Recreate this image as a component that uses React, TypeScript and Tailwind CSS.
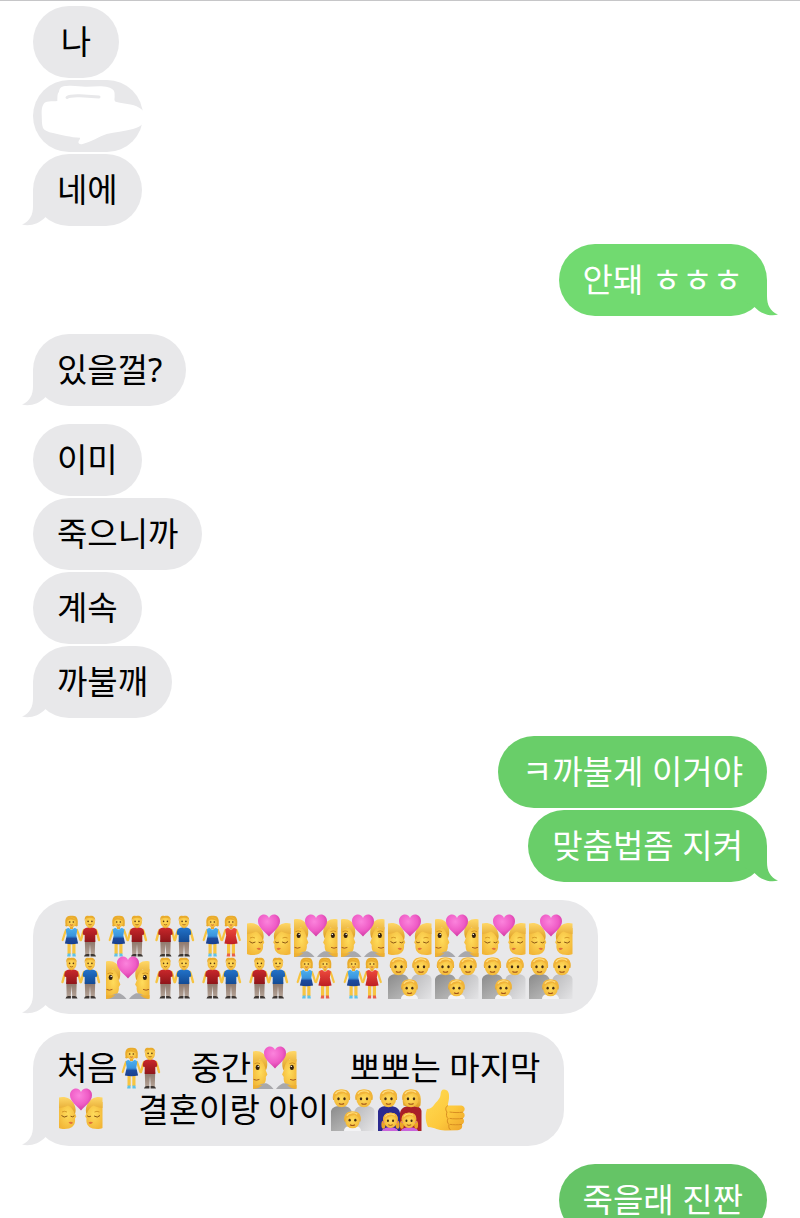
import { Fragment } from "react";
import clsx from "clsx";

type EmojiKind = "wm" | "mm" | "ww" | "kiss" | "couple" | "family" | "parents" | "thumb";

const SKIN = "#f7c440";
const HAIR = "#e9ab2c";

function Gradients() {
  return (
    <svg className="absolute size-0" aria-hidden="true">
      <defs>
        <radialGradient id="skin" cx="50%" cy="45%" r="60%">
          <stop offset="0" stopColor="#ffdc5c" />
          <stop offset="1" stopColor="#f2b637" />
        </radialGradient>
        <linearGradient id="hair" x1="0" y1="0" x2="0" y2="1">
          <stop offset="0" stopColor="#ffd868" />
          <stop offset="1" stopColor="#dd9c22" />
        </linearGradient>
        <radialGradient id="heart" cx="42%" cy="32%" r="70%">
          <stop offset="0" stopColor="#fb83dc" />
          <stop offset="0.6" stopColor="#ef5cc6" />
          <stop offset="1" stopColor="#cf37a0" />
        </radialGradient>
        <linearGradient id="red" x1="0" y1="0" x2="0" y2="1">
          <stop offset="0" stopColor="#c9272b" />
          <stop offset="1" stopColor="#8f1519" />
        </linearGradient>
        <linearGradient id="blue" x1="0" y1="0" x2="0" y2="1">
          <stop offset="0" stopColor="#2273c9" />
          <stop offset="1" stopColor="#134a94" />
        </linearGradient>
        <linearGradient id="blueDress" x1="0" y1="0" x2="0" y2="1">
          <stop offset="0" stopColor="#4db0ee" />
          <stop offset="0.5" stopColor="#3a94dd" />
          <stop offset="0.65" stopColor="#1d4a9e" />
          <stop offset="1" stopColor="#1b3f8c" />
        </linearGradient>
        <linearGradient id="redDress" x1="0" y1="0" x2="0" y2="1">
          <stop offset="0" stopColor="#ee4a3c" />
          <stop offset="1" stopColor="#bd1f24" />
        </linearGradient>
        <linearGradient id="trousers" x1="0" y1="0" x2="0" y2="1">
          <stop offset="0" stopColor="#8b7468" />
          <stop offset="1" stopColor="#b3a296" />
        </linearGradient>
        <linearGradient id="darkGray" x1="0" y1="0" x2="0.6" y2="1">
          <stop offset="0" stopColor="#8a8a8a" />
          <stop offset="1" stopColor="#b5b5b5" />
        </linearGradient>
        <linearGradient id="lightGray" x1="0" y1="0" x2="1" y2="1">
          <stop offset="0" stopColor="#b8b8ba" />
          <stop offset="1" stopColor="#e4e4e6" />
        </linearGradient>
        <linearGradient id="thumb" x1="0" y1="0" x2="1" y2="1">
          <stop offset="0" stopColor="#ffdc55" />
          <stop offset="0.6" stopColor="#fdc83c" />
          <stop offset="1" stopColor="#eda32a" />
        </linearGradient>
      </defs>
    </svg>
  );
}

function Man({ x, shirt }: { x: number; shirt: string }) {
  return (
    <g transform={`translate(${x} 0)`}>
      <path d="M-6 15 C-7.4 18 -7.8 21 -9 25 M6 15 C7.4 18 7.8 21 9 25" stroke={SKIN} strokeWidth="2.4" strokeLinecap="round" fill="none" />
      <rect x="-1.8" y="10" width="3.6" height="4" fill="#e8a82c" />
      <path d="M-5.2 25 H5.2 L4.8 40 H0.8 L0 29 L-0.8 40 H-4.8 Z" fill="url(#trousers)" />
      <path d="M-6 41.5 Q-5.6 39 -3.2 39 L-0.6 39 V41.5 Z M6 41.5 Q5.6 39 3.2 39 L0.6 39 V41.5 Z" fill="#3c3633" />
      <path d="M-7.2 19.5 C-7.2 14 -5.4 13 -2 12.6 Q0 14 2 12.6 C5.4 13 7.2 14 7.2 19.5 L5.3 20 V27 H-5.3 V20 Z" fill={shirt} />
      <ellipse cx="0" cy="7" rx="5" ry="5.6" fill="url(#skin)" />
      <path d="M-5.2 6 C-5.8 0.6 -3 0.4 -1 1 C2 0 5.6 0.8 5.2 6 C4.6 3.6 3 2.6 0 2.8 C-3 2.6 -4.6 3.6 -5.2 6 Z" fill={HAIR} />
      <circle cx="-1.9" cy="6.4" r="0.8" fill="#5b3913" />
      <circle cx="1.9" cy="6.4" r="0.8" fill="#5b3913" />
      <path d="M-1.6 9.4 Q0 10.4 1.6 9.4" stroke="#a05c16" strokeWidth="0.8" fill="none" />
    </g>
  );
}

function Woman({ x, dress, shoes }: { x: number; dress: string; shoes: string }) {
  return (
    <g transform={`translate(${x} 0)`}>
      <path d="M-5.4 15 C-6.8 18 -7.4 21 -8.8 25 M5.4 15 C6.8 18 7.4 21 8.8 25" stroke={SKIN} strokeWidth="2.2" strokeLinecap="round" fill="none" />
      <path d="M-2.4 27 V39 M2.4 27 V39" stroke={SKIN} strokeWidth="3.2" />
      <path d="M-4.4 41.5 L-3.8 38.5 H-0.9 V41.5 Z M4.4 41.5 L3.8 38.5 H0.9 V41.5 Z" fill={shoes} />
      <path d="M-6 9.4 C-7 2.5 -4 0 0 0.8 C5 -0.1 7 3.5 6.2 9.4 C6.8 11 5 12 3.8 11 L-3.8 11 C-5 12 -7 11 -6 9.4 Z" fill={HAIR} />
      <rect x="-1.6" y="10" width="3.2" height="4" fill="#e8a82c" />
      <path d="M-5.8 14.4 Q-3.8 12.6 -2.6 13 Q0 16 2.6 13 Q3.8 12.6 5.8 14.4 L4.8 20.5 L6.6 28.5 Q0 30 -6.6 28.5 L-4.8 20.5 Z" fill={dress} />
      <ellipse cx="0" cy="7.4" rx="4.7" ry="5" fill="url(#skin)" />
      <path d="M-4.8 6 C-4 1.8 2 1.6 4.8 6 C2 4.8 -1 3.4 -4.8 6" fill={HAIR} />
      <circle cx="-1.8" cy="7" r="0.8" fill="#5b3913" />
      <circle cx="1.8" cy="7" r="0.8" fill="#5b3913" />
      <path d="M-1.3 9.8 Q0 10.6 1.3 9.8" stroke="#c2482c" strokeWidth="0.8" fill="none" />
    </g>
  );
}

function Heart() {
  return (
    <path
      d="M22 21.5 C18 16.5 11 12.5 11 6.2 C11 2 14 -0.4 17 -0.4 C19.3 -0.4 21.2 1 22 3 C22.8 1 24.7 -0.4 27 -0.4 C30 -0.4 33 2 33 6.2 C33 12.5 26 16.5 22 21.5 Z"
      fill="url(#heart)"
    />
  );
}

function KissFace() {
  return (
    <>
      <path d="M0 13 L13 14 C16 17 16.3 21 16 24 L17.3 27.5 L16 29.5 C16.6 34 15 38 10 39.5 C6 40.3 2 40 0 39 Z" fill="url(#skin)" />
      <path d="M0 8.5 C5 6.8 13 9 15.5 16 C17 19 17 23 15.8 25 C14.4 21 12 18 9 16.6 C6 18 3 19 0 19 Z" fill="url(#hair)" />
      <path d="M2.5 26.5 Q5 29.4 8.4 27 M11.6 27.2 Q13.6 28.6 15.4 26.8" stroke="#8a5614" strokeWidth="1" fill="none" />
      <path d="M3 23 Q5.5 21.6 8 23" stroke="#c98a1e" strokeWidth="0.8" fill="none" />
      <path d="M9.5 33.6 Q12 32 14 33.8 Q12 36.4 9.5 33.6" fill="#e0703a" />
    </>
  );
}

function CoupleFace() {
  return (
    <>
      <path d="M0 12 L9 13 C12.6 16 13.2 20 12.6 23 L14.4 27.6 L12.8 30 C13.4 34.6 11 39 6 40.6 L0 41 Z" fill="url(#skin)" />
      <path d="M0 4.6 C6 2.8 13 6 14 14 C14.6 18 14.2 21 12.8 23.5 C12 19 10.6 15 7 12.6 C5 13.8 2.4 14.6 0 14.6 Z" fill="url(#hair)" />
      <path d="M0 42 C4 39.6 10 34.8 14 36.6 C17 38 19 40 20.5 42 Z" fill="#a8a8ac" />
      <path d="M0 38 C3 39 7 38.6 10 37.4 C7 40.4 3 42 0 42 Z" fill="#eeb032" />
      <ellipse cx="4.6" cy="20.4" rx="2" ry="2.6" fill="#33200f" />
      <circle cx="5.2" cy="19.4" r="0.7" fill="#fff" />
      <path d="M1.4 16.8 Q4 15 7 16.6" stroke="#c98a1e" strokeWidth="0.9" fill="none" />
      <path d="M0.6 32.4 Q3.4 34 6.4 32.4" stroke="#a3591c" strokeWidth="1" fill="none" />
    </>
  );
}

function Head({ x, y, s = 1, hair = "short" }: { x: number; y: number; s?: number; hair?: "short" | "long" | "tails" }) {
  return (
    <g transform={`translate(${x} ${y}) scale(${s})`}>
      {hair === "long" && <path d="M-7.6 7 C-10 -4 -6 -9 0 -8.8 C9 -9 11 -3 9.4 7 C8 9.6 4 9 3 7 L-4 8 Z" fill="url(#hair)" />}
      {hair === "tails" && (
        <>
          <ellipse cx="-8.4" cy="5" rx="2.3" ry="4.6" fill="#eba526" />
          <ellipse cx="8.4" cy="5" rx="2.3" ry="4.6" fill="#eba526" />
          <circle cx="-7.6" cy="1.6" r="1.2" fill="#d455c8" />
          <circle cx="7.6" cy="1.6" r="1.2" fill="#d455c8" />
        </>
      )}
      <path d="M-8.4 1.6 C-10 -6 -5 -9.4 0 -9 C5 -9.4 10 -6 8.4 1.6 Z" fill="url(#hair)" />
      <ellipse cx="0" cy="0.8" rx="7.6" ry="8" fill="url(#skin)" />
      <path d="M-8.2 0.6 C-9.4 -6 -5.4 -9.2 0 -9 C6.4 -9.2 9.6 -6 8.2 0.6 C7.2 -2.4 5 -4.6 2 -5.6 C-1 -4.4 -6.4 -4 -8.2 0.6 Z" fill="#f1b439" />
      <path d="M-6 -4.6 C-4 -8 2 -8.6 5 -6" stroke="#ffdf80" strokeWidth="1.2" fill="none" />
      <ellipse cx="-3" cy="0.2" rx="1.2" ry="1.5" fill="#422a12" />
      <ellipse cx="3" cy="0.2" rx="1.2" ry="1.5" fill="#422a12" />
      <path d="M-2.6 5 Q0 6.6 2.6 5" stroke="#a0541a" strokeWidth="1.1" fill="none" />
    </g>
  );
}

function Emoji({ kind }: { kind: EmojiKind }) {
  return (
    <span className="inline-flex h-[42px] w-[47px] justify-center align-top">
      <svg viewBox="0 0 44 42" className="h-[42px] w-[44px] overflow-visible" aria-hidden="true">
        {kind === "wm" && (
          <>
            <Woman x={12.5} dress="url(#blueDress)" shoes="#5ec2e8" />
            <Man x={31} shirt="url(#red)" />
          </>
        )}
        {kind === "mm" && (
          <>
            <Man x={12.5} shirt="url(#red)" />
            <Man x={31} shirt="url(#blue)" />
          </>
        )}
        {kind === "ww" && (
          <>
            <Woman x={12.5} dress="url(#blueDress)" shoes="#5ec2e8" />
            <Woman x={31} dress="url(#redDress)" shoes="#e8604c" />
          </>
        )}
        {kind === "kiss" && (
          <>
            <KissFace />
            <g transform="translate(43.5 0) scale(-1 1)">
              <KissFace />
            </g>
            <Heart />
          </>
        )}
        {kind === "couple" && (
          <>
            <CoupleFace />
            <g transform="translate(43.5 0) scale(-1 1)">
              <CoupleFace />
            </g>
            <Heart />
          </>
        )}
        {kind === "family" && (
          <>
            <path d="M0 42 V22 C1 18 5 17 10 17 C16 17 20 18 21 24 V42 Z" fill="url(#darkGray)" />
            <path d="M23 42 V24 C24 18 28 17 33 17 C39 17 43 18 43.5 22 V42 Z" fill="url(#lightGray)" />
            <Head x={10.5} y={9.5} />
            <Head x={33} y={9.5} />
            <path d="M13 42 C13 38 17 36.5 21.5 36.5 C26 36.5 30 38 30 42 Z" fill="#f3f3f5" />
            <Head x={21.5} y={31} s={0.95} />
          </>
        )}
        {kind === "parents" && (
          <>
            <path d="M0 42 V22 C1 18 5 17 10 17 C16 17 21 18 22 24 V42 Z" fill="#2b2a8f" />
            <path d="M22 42 V24 C23 18 28 17 33 17 C39 17 43 18 43.5 22 V42 Z" fill="#a81f28" />
            <Head x={10.5} y={9.5} />
            <Head x={33} y={9.5} hair="long" />
            <path d="M4 42 C5 37 19 37 20 42 Z M23 42 C24 37 39 37 40 42 Z" fill="#c964dc" />
            <Head x={12.5} y={31.5} s={0.85} hair="tails" />
            <Head x={31} y={31.5} s={0.85} hair="tails" />
          </>
        )}
        {kind === "thumb" && (
          <>
            <path
              d="M2 20 C5 20 7 18.5 9 16 C12 12 15 10 15.5 6 C15.7 2.5 16.6 0.5 19 0.5 C23 0.5 24.5 4 24 9 C23.8 12 23 14 22.8 16.5 L35 16.5 C38.5 16.5 40 18.5 39.6 20.6 C39.4 22 38.6 22.8 37.8 23.2 C40 24 40.6 28 37.8 29.4 C39.6 30.6 39.6 34.4 36.8 35.4 C38 37.6 36.6 41 32.6 41.2 L20 41.5 C13 41.5 10 38.6 3 38 C0.4 33 0 25 2 20 Z"
              fill="url(#thumb)"
            />
            <path
              d="M37.8 23.2 C34 23.8 28 23.6 24.6 23 M37.8 29.4 C34 30 28 30 24.6 29.4 M36.8 35.4 C33 36 28 35.8 25 35.4 M22.8 16.5 C20.6 18 20 20.5 22 23 C21 25.5 21.4 28 23 29.6 C21.8 32 22.4 34 24 35.4 C23.4 38 24 39.8 25.6 41"
              stroke="#d98f22"
              strokeWidth="1"
              fill="none"
            />
          </>
        )}
      </svg>
    </span>
  );
}

function Tail({ mine }: { mine?: boolean }) {
  return (
    <svg
      viewBox="0 0 36 36"
      className={clsx("absolute bottom-0 size-9", mine ? "-right-[11px] -scale-x-100" : "-left-[11px]")}
      aria-hidden="true"
    >
      <path d="M11 0 V16 C11 25 8 31 0 34.6 C8 36.6 17 34 23.5 27 L36 20 V0 Z" fill="currentColor" />
    </svg>
  );
}

// Hand-drawn eraser strokes over a hidden name
function Scribble() {
  return (
    <svg viewBox="0 0 110 72" className="absolute inset-0 size-full overflow-visible" aria-hidden="true">
      <path
        d="M8.7 35 C8.5 29 9 25 12 22.5 C16 20.5 20 21.5 24.3 21 C24.5 17 24 14 26 11.7 C26.5 7.5 29 6 33.7 6 C42 5.2 48 7 53.7 6.7 C62 6.4 70 5.6 75 7.3 C80 8.6 82 11 81.6 15 C82 18 80.6 20.5 82.7 21.7 C88 23.6 95 23.6 100 25 C105 26.6 109 29 111 32 V43 C108 46 104 48 100 49 C91 51.6 82 52 73.7 54 C65 57 58 62 49.7 64 C46.6 64.6 45.4 63.6 45.4 62 C45.6 60 47.6 59 47 57.7 C38 57.6 28 54.6 20 53 C15 52 11.4 50.6 10 48 C8.6 44 9 40 8.7 35 Z"
        fill="#fff"
      />
      <path d="M34 17.5 C37 15.6 42 15.6 47 15.8 L66 17" stroke="#e8e8ea" strokeWidth="3" strokeLinecap="round" fill="none" />
    </svg>
  );
}

type Message = {
  lines: (string | EmojiKind[])[][];
  scribble?: boolean;
};

type Group = {
  mine?: boolean;
  tone?: string;
  open?: boolean;
  messages: Message[];
};

const text = (s: string): Message => ({ lines: [[s]] });

const groups: Group[] = [
  { messages: [text("나"), { lines: [], scribble: true }, text("네에")] },
  { mine: true, tone: "bg-[#71da70] text-[#71da70]", messages: [text("안돼 ㅎㅎㅎ")] },
  { messages: [text("있을껄?")] },
  { messages: [text("이미"), text("죽으니까"), text("계속"), text("까불깨")] },
  { mine: true, tone: "bg-[#69ce69] text-[#69ce69]", messages: [text("ㅋ까불게 이거야"), text("맞춤법좀 지켜")] },
  {
    messages: [
      {
        lines: [
          [["wm", "wm", "mm", "ww", "kiss", "couple", "couple", "kiss", "couple", "kiss", "kiss"]],
          [["mm", "couple", "mm", "mm", "mm", "ww", "ww", "family", "family", "family", "family"]],
        ],
      },
    ],
  },
  {
    messages: [
      {
        lines: [
          ["처음", ["wm"], "   중간", ["couple"], "      뽀뽀는 마지막"],
          [["kiss"], "    결혼이랑 아이", ["family", "parents", "thumb"]],
        ],
      },
    ],
  },
  { mine: true, open: true, tone: "bg-[#65c466] text-[#65c466]", messages: [text("죽을래 진짠")] },
];

function Bubble({ message, mine, tone, tail }: { message: Message; mine?: boolean; tone: string; tail: boolean }) {
  return (
    <li
      className={clsx(
        "relative flex min-h-[72px] justify-center rounded-[36px] px-6 py-[15px]",
        message.scribble ? "w-[110px]" : "min-w-[86px]",
        tone
      )}
    >
      {tail && <Tail mine={mine} />}
      {message.scribble && <Scribble />}
      <div className={clsx("relative whitespace-pre", mine ? "text-white" : "text-black")}>
        {message.lines.map((line, i) => (
          <p key={i} className="h-[42px]">
            {line.map((part, j) => (
              <Fragment key={j}>{typeof part === "string" ? part : part.map((kind, k) => <Emoji key={k} kind={kind} />)}</Fragment>
            ))}
          </p>
        ))}
      </div>
    </li>
  );
}

export default function App() {
  return (
    <main className="h-screen overflow-hidden border-t border-[#c6c6c8] bg-white px-[33px] pt-[5px] font-['Noto_Sans','Noto_Sans_CJK_KR',sans-serif] text-[33px] leading-[42px]">
      <Gradients />
      <div className="flex flex-col gap-[18px]">
        {groups.map((group, i) => (
          <ul key={i} className={clsx("flex flex-col gap-0.5", group.mine ? "items-end" : "items-start")}>
            {group.messages.map((message, j) => (
              <Bubble
                key={j}
                message={message}
                mine={group.mine}
                tone={group.tone ?? "bg-[#e8e8ea] text-[#e8e8ea]"}
                tail={!group.open && j === group.messages.length - 1}
              />
            ))}
          </ul>
        ))}
      </div>
    </main>
  );
}
